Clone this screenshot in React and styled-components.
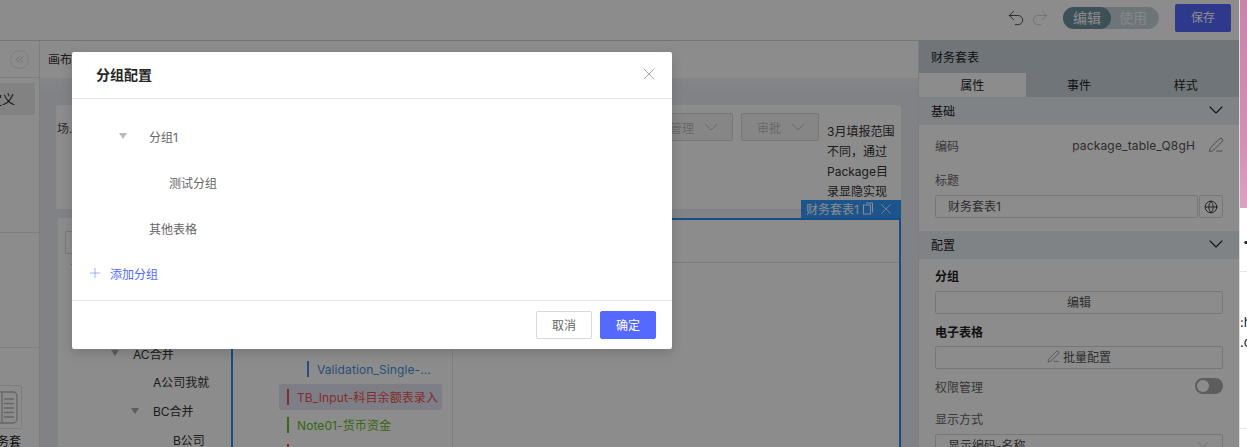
import styled, { createGlobalStyle } from "styled-components";
import { ChevronDown, ChevronsLeft, Globe, PenLine, Plus, Redo2, Undo2, X } from "lucide-react";

const GlobalStyle = createGlobalStyle`
    html, body {
        margin: 0;
        padding: 0;
        background: #fff;
    }

    * {
        box-sizing: border-box;
    }

    body {
        font-family: "Inter", "Noto Sans CJK SC", sans-serif;
        font-size: 12px;
        color: #333;
    }
`

const Page = styled.div`
    display: flex;
    width: 1247px;
    height: 447px;
    overflow: hidden;
`

const Shell = styled.div`
    position: relative;
    display: flex;
    flex-direction: column;
    width: 1239px;
    height: 447px;
    overflow: hidden;
    background: #fff;
`

const Header = styled.header`
    display: flex;
    align-items: center;
    justify-content: flex-end;
    flex: none;
    height: 41px;
    padding: 0 8px 5px 0;
    border-bottom: 1px solid #d6d6d6;
`

const HistoryIcon = styled.span`
    display: flex;
    margin-right: ${(p) => (p.$off ? 13 : 4)}px;
    color: ${(p) => (p.$off ? "#cfcfcf" : "#444")};
`

const ModeSwitch = styled.div`
    display: flex;
    width: 96px;
    height: 22px;
    margin-right: 16px;
    border-radius: 11px;
    background: #c6d6dc;
    font-size: 14px;
`

const ModeOption = styled.span`
    display: flex;
    align-items: center;
    justify-content: center;
    width: ${(p) => (p.$on ? "48px" : "44px")};
    padding-bottom: 1px;
    border-radius: 11px;
    background: ${(p) => (p.$on ? "#6f929f" : "transparent")};
    color: ${(p) => (p.$on ? "#fff" : "#f4f4f4")};
`

const SaveButton = styled.button`
    width: 56px;
    height: 28px;
    padding: 0 0 2px;
    border: none;
    border-radius: 2px;
    background: #5469ff;
    color: #fff;
    font: inherit;
`

const Main = styled.div`
    display: flex;
    flex: 1;
    min-height: 0;
`

const Sidebar = styled.aside`
    display: flex;
    flex-direction: column;
    flex: none;
    width: 40px;
    border-right: 1px solid #e6e6e6;
`

const SideTop = styled.div`
    display: flex;
    align-items: center;
    justify-content: flex-end;
    flex: none;
    height: 37px;
    padding-right: 10px;
    border-bottom: 1px solid #e6e6e6;
`

const CollapseButton = styled.span`
    display: flex;
    align-items: center;
    justify-content: center;
    width: 19px;
    height: 19px;
    border: 1px solid #e3e3e3;
    border-radius: 50%;
    color: #999;
`

const SideItem = styled.div`
    display: flex;
    align-items: center;
    justify-content: flex-end;
    flex: none;
    width: 35px;
    height: 32px;
    margin-top: 5px;
    padding: 0 20px 2px 0;
    background: #ededed;
    color: #222;
    font-size: 13px;
    white-space: nowrap;
`

const SideSection = styled.div`
    flex: none;
    height: ${(p) => p.$h}px;
    border-bottom: 1px solid #e6e6e6;
`

const SideApp = styled.div`
    display: flex;
    flex-direction: column;
    align-items: flex-end;
    width: 70px;
    margin-left: -30px;
    padding: 37px 18px 0 0;
`

const AppTile = styled.div`
    display: flex;
    align-items: center;
    justify-content: flex-end;
    width: 44px;
    height: 44px;
    padding-right: 3px;
    border: 1px solid #e3e3e3;
    border-radius: 2px;
`

const AppLabel = styled.span`
    margin: 3px 1px 0 0;
    color: #222;
    font-size: 12px;
    white-space: nowrap;
`

const Canvas = styled.main`
    display: flex;
    flex-direction: column;
    flex: none;
    width: 878px;
`

const CanvasBar = styled.div`
    display: flex;
    align-items: center;
    flex: none;
    height: 37px;
    padding: 0 0 2px 8px;
    font-size: 12px;
`

const CanvasBody = styled.div`
    flex: 1;
    padding: 27px 17px 0 16px;
    background: linear-gradient(#eef1f5, #e9edf3 20px);
`

const TopCard = styled.section`
    display: flex;
    height: 104px;
    padding-left: 1px;
    border-radius: 3px 3px 0 0;
    background: #fff;
`

const SceneLabel = styled.span`
    flex: 1;
    margin-top: 14px;
    font-size: 12px;
    color: #555;
`

const DropButton = styled.div`
    display: flex;
    align-items: center;
    gap: 5px;
    width: ${(p) => p.$w}px;
    height: 28px;
    margin: 8px 8px 0 0;
    padding-left: ${(p) => p.$pl}px;
    border: 1px solid #d9d9d9;
    border-radius: 2px;
    background: #f5f5f5;
    color: #bdbdbd;
    font-size: 12px;
`

const NoteText = styled.div`
    width: 74px;
    padding: 17px 4px 0 0;
    font-size: 12px;
    line-height: 20px;
    color: #333;
`

const BottomCard = styled.section`
    display: flex;
    height: 229px;
    margin: 9px 0 0 1px;
    background: #fff;
`

const TreePanel = styled.div`
    flex: none;
    width: 174px;
    padding-top: 13px;
    border-left: 1px solid #eee;
`

const SearchInput = styled.div`
    width: 150px;
    height: 23px;
    margin-left: 7px;
    border: 1px solid #d9d9d9;
    border-radius: 2px;
`

const TreeRow = styled.div`
    display: flex;
    align-items: center;
    height: 28.67px;
    padding: 0 0 2px ${(p) => 51 + p.$depth * 20}px;
    color: #333;
    white-space: nowrap;
`

const Caret = styled.span`
    display: flex;
    align-items: center;
    justify-content: center;
    flex: none;
    width: 12px;
    margin-right: ${(p) => p.$mr || 12}px;

    &::before {
        content: "";
        display: ${(p) => (p.$open ? "block" : "none")};
        border-top: 6px solid ${(p) => p.$color || "#aaa"};
        border-left: 4px solid transparent;
        border-right: 4px solid transparent;
    }
`

const Frame = styled.div`
    position: relative;
    flex: 1;
    border: 2px solid #2b8df5;
    border-bottom: none;
`

const FrameTag = styled.div`
    position: absolute;
    top: -20px;
    right: -2px;
    display: flex;
    align-items: center;
    gap: 3px;
    width: 100px;
    height: 18px;
    padding: 0 0 1px 5px;
    background: #3399ff;
    color: #fff;
    font-size: 12px;
    white-space: nowrap;
`

const FrameToolbar = styled.div`
    height: 43px;
    border-bottom: 1px solid #e3e3e3;
`

const SheetList = styled.div`
    width: 220px;
    height: 200px;
    padding-top: 93px;
    border-right: 1px solid #e6e6e6;
`

const SheetRow = styled.div`
    display: flex;
    align-items: center;
    gap: 8px;
    width: 163px;
    height: 26px;
    margin: 0 0 1.75px 46px;
    padding-left: ${(p) => 8 + p.$depth * 20}px;
    border-radius: 2px;
    background: ${(p) => (p.$active ? "#e6e7f5" : "transparent")};
    color: ${(p) => p.$color};
    font-size: 12px;
    letter-spacing: 0.1px;
    white-space: nowrap;
`

const SheetBar = styled.span`
    flex: none;
    width: 2px;
    height: 16px;
    background: ${(p) => p.$color};
`

const Panel = styled.aside`
    display: flex;
    flex-direction: column;
    flex: 1;
    min-width: 0;
    border-left: 1px solid #e6e6e6;
`

const PanelTitle = styled.div`
    display: flex;
    align-items: center;
    flex: none;
    height: 32px;
    padding: 0 0 2px 12px;
    background: #cbd6db;
    color: #222;
    font-size: 12px;
`

const Tabs = styled.div`
    display: grid;
    grid-template-columns: repeat(3, 1fr);
    flex: none;
    height: 24px;
    background: #cbd6db;
`

const Tab = styled.div`
    display: flex;
    align-items: center;
    justify-content: center;
    padding-bottom: 2px;
    background: ${(p) => (p.$active ? "#fff" : "transparent")};
    color: #222;
    font-size: 12px;
`

const SectionHead = styled.div`
    display: flex;
    align-items: center;
    justify-content: space-between;
    flex: none;
    height: 28px;
    margin-top: ${(p) => p.$mt || 0}px;
    padding: 0 11px 2px 12px;
    background: #e9eef3;
    color: #222;
    font-size: 12px;
`

const Field = styled.div`
    display: flex;
    align-items: center;
    justify-content: space-between;
    flex: none;
    height: ${(p) => p.$h || 20}px;
    margin: ${(p) => p.$mt || 0}px 16px 0;
    padding-bottom: 2px;
    color: ${(p) => (p.$bold ? "#222" : "#666")};
    font-size: 12px;
    font-weight: ${(p) => (p.$bold ? 600 : 400)};
`

const CodeValue = styled.span`
    display: flex;
    align-items: center;
    gap: 13px;
    margin-right: -1px;
    color: #555;
    letter-spacing: 0.15px;
`

const InputRow = styled.div`
    display: flex;
    gap: 1px;
    flex: none;
    height: 23px;
    margin: ${(p) => p.$mt ?? 5}px 16px 0;
`

const TextBox = styled.div`
    display: flex;
    align-items: center;
    justify-content: ${(p) => (p.$center ? "center" : "space-between")};
    gap: 3px;
    flex: 1;
    min-width: 0;
    padding: 0 ${(p) => (p.$center ? 0 : 10)}px 2px ${(p) => (p.$center ? 0 : 12)}px;
    border: 1px solid #d9d9d9;
    border-radius: 2px;
    color: #555;
    font-size: 12px;
`

const GlobeButton = styled.div`
    display: flex;
    align-items: center;
    justify-content: center;
    width: 24px;
    border: 1px solid #d9d9d9;
    border-radius: 2px;
    color: #222;
`

const Toggle = styled.span`
    display: flex;
    align-items: center;
    width: 28px;
    height: 16px;
    padding-left: 2px;
    border-radius: 8px;
    background: #aaa;

    &::before {
        content: "";
        width: 12px;
        height: 12px;
        border-radius: 50%;
        background: #fff;
    }
`

const Strip = styled.div`
    flex: 1;
    overflow: hidden;
    border-left: 1px solid #ddd;
    background: #fff;
`

const StripArt = styled.div`
    height: 208px;
    background: linear-gradient(#c984a9, #d490b4 70%, #dba3c2);
`

const StripBlock = styled.div`
    height: ${(p) => p.$h}px;
    padding: ${(p) => p.$pt || 0}px 0 0 ${(p) => p.$pl || 0}px;
    border-bottom: 1px solid #e8e8e8;
    color: #222;
    font-size: ${(p) => p.$size || 13}px;
    line-height: 20px;
    white-space: nowrap;
`

const Overlay = styled.div`
    position: absolute;
    inset: 0;
    padding: 52px 0 0 72px;
    background: rgba(0, 0, 0, 0.45);
`

const Modal = styled.div`
    display: flex;
    flex-direction: column;
    width: 600px;
    height: 297px;
    border-radius: 2px;
    background: #fff;
    box-shadow: 0 4px 12px rgba(0, 0, 0, 0.15);
`

const ModalHead = styled.div`
    display: flex;
    align-items: center;
    justify-content: space-between;
    flex: none;
    height: 47px;
    padding: 0 13px 2px 24px;
    border-bottom: 1px solid #e8e8e8;
`

const ModalTitle = styled.h2`
    margin: 0;
    color: #262626;
    font-size: 14px;
    font-weight: 600;
`

const CloseButton = styled.span`
    display: flex;
    color: #8c8c8c;
`

const ModalBody = styled.div`
    flex: 1;
    padding-top: 14px;
`

const GroupRow = styled.div`
    display: flex;
    align-items: center;
    height: 46px;
    padding-left: ${(p) => 45 + p.$depth * 20}px;
    color: #666;
    font-size: 12px;
`

const AddGroup = styled.div`
    display: flex;
    align-items: center;
    gap: 7px;
    height: 42px;
    margin-top: 1px;
    padding-left: 15px;
    color: #5469ff;
    font-size: 12px;
`

const ModalFoot = styled.div`
    display: flex;
    align-items: center;
    justify-content: flex-end;
    gap: 8px;
    flex: none;
    height: 49px;
    padding-right: 16px;
    border-top: 1px solid #e8e8e8;
`

const ModalButton = styled.button`
    width: 56px;
    height: 28px;
    padding: 0 0 2px;
    border: 1px solid ${(p) => (p.$primary ? "#5469ff" : "#d9d9d9")};
    border-radius: 2px;
    background: ${(p) => (p.$primary ? "#5469ff" : "#fff")};
    color: ${(p) => (p.$primary ? "#fff" : "#666")};
    font: inherit;
`

const treeRows = [
    { depth: -2, open: true, name: "" },
    { depth: -1, name: "" },
    { depth: -1, name: "" },
    { depth: 0, open: true, name: "AC合并" },
    { depth: 1, name: "A公司我就" },
    { depth: 1, open: true, name: "BC合并" },
    { depth: 2, name: "B公司" },
]

const sheetRows = [
    { depth: 1, color: "#4a8fe0", name: "Validation_Single-..." },
    { depth: 0, color: "#f05050", name: "TB_Input-科目余额表录入", active: true },
    { depth: 0, color: "#66bb22", name: "Note01-货币资金" },
    { depth: 0, color: "#f05050", name: "" },
]

const SheetFileIcon = () => (
    <svg width="30" height="33" viewBox="0 0 30 33" fill="none" stroke="#bbb" strokeWidth="1.4">
        <rect x="1" y="1" width="28" height="31" rx="4" />
        <path d="M14 1v31M16 8h10M16 12.500h10M16 17h10M16 21.500h10M16 26h10" />
    </svg>
)

const CopyIcon = () => (
    <svg width="12" height="13" viewBox="0 0 12 13" fill="none" stroke="#fff" strokeWidth="1">
        <rect x="1.500" y="3" width="7" height="9" />
        <path d="M4 1h6.500v9.500" />
    </svg>
)

const App = () => {
    return (
        <Page>
            <GlobalStyle />
            <Shell>
                <Header>
                    <HistoryIcon><Undo2 size={20} strokeWidth={1.1} /></HistoryIcon>
                    <HistoryIcon $off><Redo2 size={20} strokeWidth={1.1} /></HistoryIcon>
                    <ModeSwitch>
                        <ModeOption $on>编辑</ModeOption>
                        <ModeOption>使用</ModeOption>
                    </ModeSwitch>
                    <SaveButton>保存</SaveButton>
                </Header>

                <Main>
                    <Sidebar>
                        <SideTop><CollapseButton><ChevronsLeft size={13} strokeWidth={1} /></CollapseButton></SideTop>
                        <SideItem>自定义</SideItem>
                        <SideSection $h={118} />
                        <SideSection $h={115} />
                        <SideApp>
                            <AppTile><SheetFileIcon /></AppTile>
                            <AppLabel>财务套</AppLabel>
                        </SideApp>
                    </Sidebar>

                    <Canvas>
                        <CanvasBar>画布</CanvasBar>
                        <CanvasBody>
                            <TopCard>
                                <SceneLabel>场...</SceneLabel>
                                <DropButton $w={90} $pl={26}>管理 <ChevronDown size={24} strokeWidth={1} /></DropButton>
                                <DropButton $w={78} $pl={15}>审批 <ChevronDown size={24} strokeWidth={1} /></DropButton>
                                <NoteText>3月填报范围不同，通过Package目录显隐实现</NoteText>
                            </TopCard>
                            <BottomCard>
                                <TreePanel>
                                    <SearchInput />
                                    {treeRows.map((row, i) => (
                                        <TreeRow key={i} $depth={row.depth}>
                                            <Caret $open={row.open} />
                                            {row.name}
                                        </TreeRow>
                                    ))}
                                </TreePanel>
                                <Frame>
                                    <FrameTag>
                                        财务套表1
                                        <CopyIcon />
                                        <X size={18} strokeWidth={1} />
                                    </FrameTag>
                                    <FrameToolbar />
                                    <SheetList>
                                        {sheetRows.map((row, i) => (
                                            <SheetRow key={i} $depth={row.depth} $color={row.color} $active={row.active}>
                                                <SheetBar $color={row.color} />
                                                {row.name}
                                            </SheetRow>
                                        ))}
                                    </SheetList>
                                </Frame>
                            </BottomCard>
                        </CanvasBody>
                    </Canvas>

                    <Panel>
                        <PanelTitle>财务套表</PanelTitle>
                        <Tabs>
                            <Tab $active>属性</Tab>
                            <Tab>事件</Tab>
                            <Tab>样式</Tab>
                        </Tabs>
                        <SectionHead>基础 <ChevronDown size={24} strokeWidth={1.1} /></SectionHead>
                        <Field $h={24} $mt={9}>
                            编码
                            <CodeValue>package_table_Q8gH <PenLine size={16} strokeWidth={1} /></CodeValue>
                        </Field>
                        <Field $mt={12}>标题</Field>
                        <InputRow>
                            <TextBox>财务套表1</TextBox>
                            <GlobeButton><Globe size={14} strokeWidth={1.4} /></GlobeButton>
                        </InputRow>
                        <SectionHead $mt={13}>配置 <ChevronDown size={24} strokeWidth={1.1} /></SectionHead>
                        <Field $bold $mt={7}>分组</Field>
                        <InputRow><TextBox $center>编辑</TextBox></InputRow>
                        <Field $bold $mt={8}>电子表格</Field>
                        <InputRow $mt={4}>
                            <TextBox $center><PenLine size={13} strokeWidth={1} />批量配置</TextBox>
                        </InputRow>
                        <Field $mt={8}>权限管理 <Toggle /></Field>
                        <Field $mt={12}>显示方式</Field>
                        <InputRow>
                            <TextBox>显示编码-名称 <ChevronDown size={18} strokeWidth={1} color="#bbb" /></TextBox>
                        </InputRow>
                    </Panel>
                </Main>

                <Overlay>
                    <Modal>
                        <ModalHead>
                            <ModalTitle>分组配置</ModalTitle>
                            <CloseButton><X size={20} strokeWidth={0.9} /></CloseButton>
                        </ModalHead>
                        <ModalBody>
                            <GroupRow $depth={0}>
                                <Caret $open $color="#bbb" $mr={20} />
                                分组1
                            </GroupRow>
                            <GroupRow $depth={1}>
                                <Caret $mr={20} />
                                测试分组
                            </GroupRow>
                            <GroupRow $depth={0}>
                                <Caret $mr={20} />
                                其他表格
                            </GroupRow>
                            <AddGroup>
                                <Plus size={16} strokeWidth={1.2} color="#8b9bff" />
                                添加分组
                            </AddGroup>
                        </ModalBody>
                        <ModalFoot>
                            <ModalButton>取消</ModalButton>
                            <ModalButton $primary>确定</ModalButton>
                        </ModalFoot>
                    </Modal>
                </Overlay>
            </Shell>

            <Strip>
                <StripArt />
                <StripBlock $h={64} $pt={23} $pl={3} $size={10}>•</StripBlock>
                <StripBlock $h={157} $pt={40}>
                    :h<br />.c
                </StripBlock>
            </Strip>
        </Page>
    )
}

export default App;
